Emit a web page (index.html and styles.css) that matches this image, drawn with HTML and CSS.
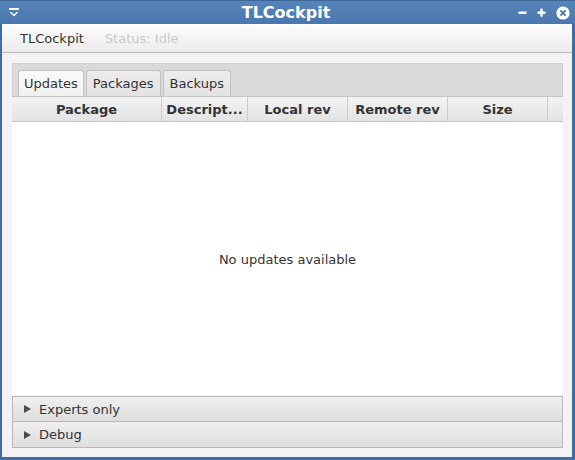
FILE: index.html
```html
<!DOCTYPE html>
<html>
<head>
<meta charset="utf-8">
<link rel="stylesheet" href="styles.css">
</head>
<body>
<div class="window">
  <div class="titlebar">
    <svg class="menu-icon" width="12" height="12" viewBox="0 0 12 12">
      <rect x="1" y="1" width="10" height="2" fill="#fff"/>
      <path d="M1.5 5 L6 9.5 L10.5 5 L8.5 5 L6 7.5 L3.5 5 Z" fill="#fff"/>
    </svg>
    <div class="title">TLCockpit</div>
    <div class="controls">
      <svg width="10" height="10" viewBox="0 0 10 10"><rect x="0.5" y="3.5" width="8" height="2.4" fill="#fff"/></svg>
      <svg width="10" height="10" viewBox="0 0 10 10"><rect x="0.5" y="3.5" width="8" height="2.4" fill="#fff"/><rect x="3.3" y="0.7" width="2.4" height="8" fill="#fff"/></svg>
      <svg width="14" height="14" viewBox="0 0 14 14"><circle cx="7" cy="7" r="6.6" fill="#fff"/><path d="M4.4 4.4 L9.6 9.6 M9.6 4.4 L4.4 9.6" stroke="#4c7ab0" stroke-width="2"/></svg>
    </div>
  </div>
  <div class="client">
    <div class="menubar">
      <span class="menu-item">TLCockpit</span>
      <span class="menu-item disabled">Status: Idle</span>
    </div>
    <div class="main">
      <div class="tabpane">
        <div class="tabs">
          <div class="tab selected">Updates</div>
          <div class="tab">Packages</div>
          <div class="tab">Backups</div>
        </div>
        <div class="table-head">
          <div class="col c-pkg">Package</div>
          <div class="col c-desc">Descript...</div>
          <div class="col c-local">Local rev</div>
          <div class="col c-remote">Remote rev</div>
          <div class="col c-size">Size</div>
          <div class="col c-fill"></div>
        </div>
        <div class="table-body">No updates available</div>
      </div>
      <div class="titled">
        <span class="arrow"></span><span>Experts only</span>
      </div>
      <div class="titled second">
        <span class="arrow"></span><span>Debug</span>
      </div>
    </div>
  </div>
</div>
</body>
</html>
```
FILE: styles.css
```css
* { box-sizing: border-box; }
html, body { margin: 0; padding: 0; }
body {
  width: 575px;
  height: 460px;
  overflow: hidden;
  font-family: "DejaVu Sans", sans-serif;
  font-size: 13px;
  color: #333;
}
.window {
  width: 575px;
  height: 460px;
  display: flex;
  flex-direction: column;
  background: #3f6da3;
}
.titlebar {
  height: 24px;
  flex: none;
  display: flex;
  align-items: center;
  background: linear-gradient(#5684ba, #4a78ae);
  border-top: 1px solid #3a6698;
  padding: 0 5px 0 8px;
}
.menu-icon { flex: none; }
.title {
  flex: 1;
  text-align: center;
  color: #fff;
  font-weight: bold;
  font-size: 16px;
  padding-left: 34px;
}
.controls {
  display: flex;
  align-items: center;
  gap: 9px;
}
.client {
  flex: 1;
  margin: 0 3px 3px 2px;
  background: #f3f3f3;
  display: flex;
  flex-direction: column;
}
.menubar {
  height: 29px;
  flex: none;
  background: linear-gradient(#fdfdfd, #ebebeb);
  border-bottom: 1px solid #bcbcbc;
  display: flex;
  align-items: center;
  padding-left: 18px;
  gap: 21px;
}
.menu-item { color: #333; }
.menu-item.disabled { color: #c9c9c9; }
.main {
  flex: 1;
  display: flex;
  flex-direction: column;
  padding: 10px 9px 9px 10px;
}
.tabpane {
  flex: 1;
  display: flex;
  flex-direction: column;
}
.tabs {
  height: 33px;
  background: #dadada;
  border: 1px solid #cfcfcf;
  border-bottom: none;
  display: flex;
  align-items: flex-end;
  padding-left: 5px;
  gap: 2px;
}
.tab {
  height: 26px;
  padding: 0 6px;
  border: 1px solid #c2c2c2;
  border-bottom: none;
  border-radius: 3px 3px 0 0;
  background: linear-gradient(#ececec, #e3e3e3);
  display: flex;
  align-items: center;
  color: #333;
}
.tab.selected {
  padding: 0 5px;
  background: linear-gradient(#fafafa, #f1f1f1);
}
.table-head {
  height: 26px;
  display: flex;
  background: linear-gradient(#f3f3f3, #e3e3e3);
  border-top: 1px solid #c4c4c4;
  border-bottom: 1px solid #c4c4c4;
}
.col {
  display: flex;
  align-items: center;
  justify-content: center;
  font-weight: bold;
  border-right: 1px solid #cbcbcb;
  color: #333;
}
.c-pkg { width: 150px; }
.c-desc { width: 86px; }
.c-local { width: 100px; }
.c-remote { width: 100px; }
.c-size { width: 100px; }
.c-fill { flex: 1; border-right: none; }
.table-body {
  flex: 1;
  background: #fff;
  display: flex;
  align-items: center;
  justify-content: center;
  padding-top: 2px;
  color: #333;
}
.titled {
  height: 26px;
  flex: none;
  margin-top: 1px;
  border: 1px solid #b9b9b9;
  background: linear-gradient(#efefef, #dedede);
  display: flex;
  align-items: center;
  padding-left: 11px;
  gap: 8px;
}
.titled.second { margin-top: 0; border-top: none; }
.arrow {
  width: 0;
  height: 0;
  border-top: 4.5px solid transparent;
  border-bottom: 4.5px solid transparent;
  border-left: 7px solid #4d4d4d;
}
```
